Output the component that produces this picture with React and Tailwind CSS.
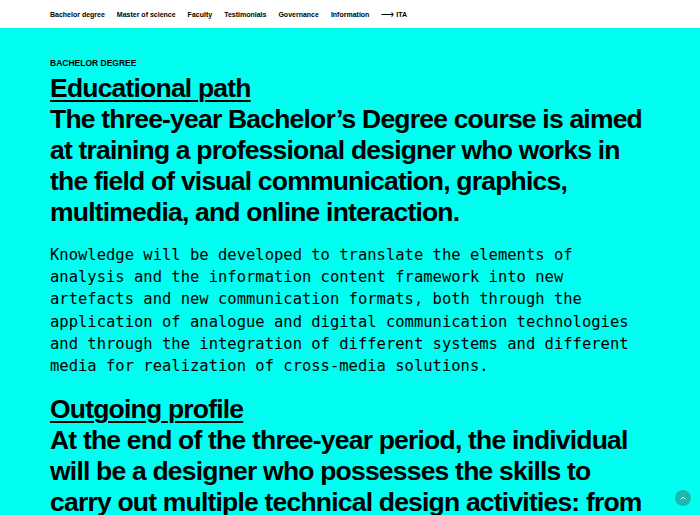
import { ChevronUp } from "lucide-react";

const nav = [
  "Bachelor degree",
  "Master of science",
  "Faculty",
  "Testimonials",
  "Governance",
  "Information",
];

function Section({ title, lead, body }) {
  return (
    <section className="mb-[17px]">
      <h2 className="text-[26.5px] leading-[31px] font-bold tracking-[-0.8px] underline underline-offset-[3px] decoration-[2px]">
        {title}
      </h2>
      <p className="text-[26.5px] leading-[31px] font-bold tracking-[-0.8px]">{lead}</p>
      {body && (
        <p
          className="mt-[16px] text-[15.5px] leading-[22.2px]"
          style={{ fontFamily: '"DejaVu Sans Mono", "Liberation Mono", monospace' }}
        >
          {body}
        </p>
      )}
    </section>
  );
}

export default function App() {
  return (
    <div className="min-h-screen bg-[#00fff0] text-black" style={{ fontFamily: '"Liberation Sans", Arial, sans-serif' }}>
      <header className="h-[28px] bg-white flex items-center px-[50px] gap-[12px] text-[7px] font-bold">
        {nav.map((n) => (
          <a key={n} href="#" className="leading-none text-black">
            {n}
          </a>
        ))}
        <a href="#" className="leading-none text-black">
          <span className="font-normal text-[9px]">⟶</span> ITA
        </a>
      </header>
      <main className="px-[50px] pt-[29px]">
        <div className="text-[8.5px] leading-[12px] font-bold uppercase mb-[4px]">Bachelor degree</div>
        <Section
          title="Educational path"
          lead="The three-year Bachelor’s Degree course is aimed at training a professional designer who works in the field of visual communication, graphics, multimedia, and online interaction."
          body="Knowledge will be developed to translate the elements of analysis and the information content framework into new artefacts and new communication formats, both through the application of analogue and digital communication technologies and through the integration of different systems and different media for realization of cross-media solutions."
        />
        <Section
          title="Outgoing profile"
          lead="At the end of the three-year period, the individual will be a designer who possesses the skills to carry out multiple technical design activities: from graphic design to web design, from photography to video production."
          body="The graduate will be able to work in communication agencies, design studios, publishing houses and in the communication departments of companies and institutions."
        />
      </main>
      <button className="fixed right-[9px] bottom-[9px] w-[16px] h-[16px] rounded-full bg-[#1cb8b0] flex items-center justify-center text-white">
        <ChevronUp size={8} strokeWidth={3} />
      </button>
    </div>
  );
}
